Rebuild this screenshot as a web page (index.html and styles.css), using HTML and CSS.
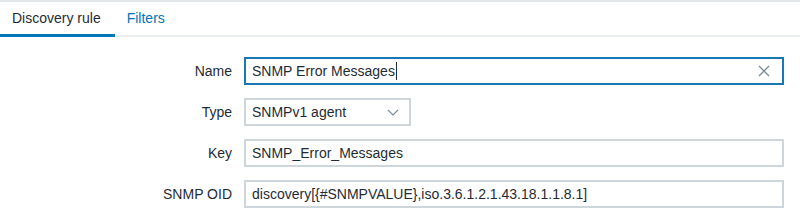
FILE: index.html
```html
<!DOCTYPE html>
<html>
<head>
<meta charset="utf-8">
<link rel="stylesheet" href="styles.css">
</head>
<body>
<div class="page">
  <nav class="tabs">
    <span class="tab active">Discovery rule</span>
    <span class="tab">Filters</span>
  </nav>
  <form class="form">
    <label class="label">Name</label>
    <div class="field focused">
      <span class="value">SNMP Error Messages</span><span class="caret"></span>
      <svg class="clear" width="12" height="12" viewBox="0 0 12 12"><path d="M1 1 L11 11 M11 1 L1 11" stroke="#768d99" stroke-width="1.4" fill="none"/></svg>
    </div>
    <label class="label">Type</label>
    <div class="field select">
      <span class="value">SNMPv1 agent</span>
      <svg class="chev" width="12" height="7" viewBox="0 0 12 7"><path d="M1 1 L6 6 L11 1" stroke="#768d99" stroke-width="1.2" fill="none"/></svg>
    </div>
    <label class="label">Key</label>
    <div class="field"><span class="value">SNMP_Error_Messages</span></div>
    <label class="label">SNMP OID</label>
    <div class="field"><span class="value">discovery[{#SNMPVALUE},iso.3.6.1.2.1.43.18.1.1.8.1]</span></div>
  </form>
</div>
</body>
</html>
```
FILE: styles.css
```css
html, body {
  margin: 0;
  padding: 0;
  background: #ffffff;
}
body {
  font-family: "Liberation Sans", Arial, sans-serif;
  font-size: 14px;
  color: #1f2c33;
}
.page {
  border-top: 2px solid #e3e7ea;
}
.tabs {
  display: flex;
  height: 33px;
  border-bottom: 2px solid #ebeef0;
}
.tab {
  display: flex;
  align-items: center;
  padding: 0 12px 0 12px;
  color: #0275b8;
  border-bottom: 3px solid transparent;
  margin-bottom: -2px;
}
.tab.active {
  color: #1f2c33;
  border-bottom-color: #0275b8;
  padding-right: 14px;
}
.form {
  display: grid;
  grid-template-columns: 232px 540px;
  column-gap: 12px;
  row-gap: 13px;
  padding-top: 20px;
  align-items: center;
}
.label {
  text-align: right;
}
.field {
  box-sizing: border-box;
  height: 28px;
  border: 2px solid #cdd6db;
  display: flex;
  align-items: center;
  padding: 0 6px;
  position: relative;
}
.field.focused {
  border-color: #1b77b3;
}
.field.select {
  width: 167px;
}
.value {
  white-space: nowrap;
}
.caret {
  display: inline-block;
  width: 1px;
  height: 18px;
  background: #1f2c33;
  margin-left: 1px;
}
.clear {
  margin-left: auto;
  margin-right: 6px;
}
.chev {
  margin-left: auto;
  margin-right: 4px;
}
```
